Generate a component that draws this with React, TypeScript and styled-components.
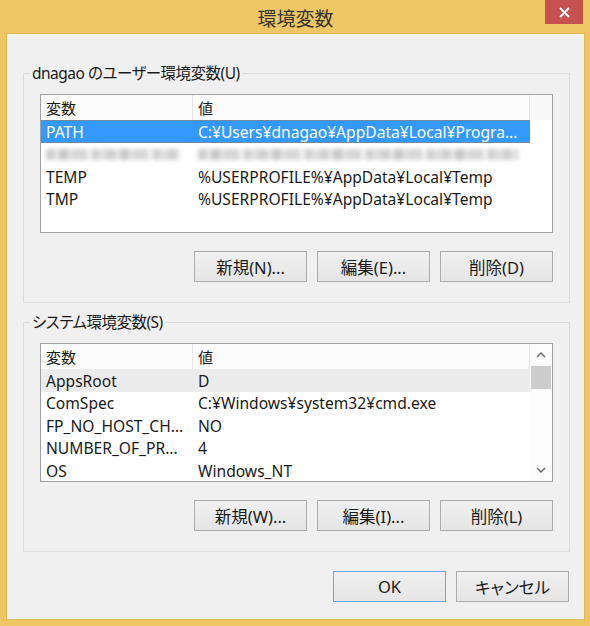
import React from "react";
import styled, { createGlobalStyle } from "styled-components";

const Global = createGlobalStyle`
  html, body { margin: 0; padding: 0; background: #eec764; }
  body {
    font-family: "Noto Sans", "Noto Sans CJK JP", sans-serif;
    font-feature-settings: "palt";
  }
  * { box-sizing: border-box; }
`;

const Window = styled.div`
  width: 590px;
  height: 626px;
  background: #eec764;
  display: flex;
  flex-direction: column;
  padding: 0 6px 7px 7px;
`;

const TitleBar = styled.div`
  height: 34px;
  display: grid;
  grid-template-columns: 1fr auto 1fr;
`;

const Title = styled.div`
  grid-column: 2;
  align-self: center;
  font-family: "Noto Sans CJK JP", sans-serif;
  font-size: 19px;
  color: #333;
  line-height: 34px;
  padding-top: 1px;
`;

const CloseButton = styled.div`
  grid-column: 3;
  justify-self: end;
  align-self: start;
  margin-right: 1px;
  width: 38px;
  height: 24px;
  background: #c75050;
  display: flex;
  align-items: center;
  justify-content: center;
`;

const Client = styled.div`
  flex: 1;
  background: #f0f0f0;
  box-shadow: 0 0 0 1px #dcb95c;
  padding: 39px 14px 16px 16px;
  display: flex;
  flex-direction: column;
  color: #1a1a1a;
  font-size: 15px;
`;

const Group = styled.div<{ $gap?: number }>`
  position: relative;
  border: 1px solid #dcdcdc;
  padding: 20px 16px 20px 16px;
  margin-top: ${(p) => p.$gap ?? 0}px;
  display: flex;
  flex-direction: column;
`;

const GroupLabel = styled.span`
  position: absolute;
  top: -11px;
  left: 6px;
  padding: 0 2px;
  background: #f0f0f0;
  line-height: 20px;
  font-size: 15.5px;
  letter-spacing: -0.5px;
`;

const ListBox = styled.div`
  height: 139px;
  border: 1px solid #a0a0a0;
  background: #fff;
  display: flex;
  font-size: 15.6px;
`;

const ListMain = styled.div`
  width: 489px;
  display: flex;
  flex-direction: column;
`;

const Side = styled.div`
  flex: 1;
  display: flex;
  flex-direction: column;
`;

const HeaderRow = styled.div`
  height: 25px;
  display: flex;
  background: #fbfbfb;
`;

const HeaderCell = styled.div<{ $w: number }>`
  width: ${(p) => p.$w}px;
  padding-left: 5px;
  line-height: 25px;
  border-right: 1px solid #e5e5e5;
  font-family: "Noto Sans CJK JP", sans-serif;
  font-size: 15px;
`;

const HeaderFiller = styled.div`
  height: 25px;
  background: #f8f8f8;
`;

const Row = styled.div<{ $sel?: "focus" | "gray" }>`
  height: 22.5px;
  flex-shrink: 0;
  display: flex;
  align-items: center;
  padding-top: 1px;
  white-space: nowrap;
  background: ${(p) =>
    p.$sel === "focus" ? "#3399ff" : p.$sel === "gray" ? "#ececec" : "transparent"};
  color: ${(p) => (p.$sel === "focus" ? "#fff" : "inherit")};
  outline: ${(p) => (p.$sel === "focus" ? "1px solid #6f8aa6" : "none")};
  outline-offset: -1px;
`;

const Cell = styled.div<{ $w: number }>`
  width: ${(p) => p.$w}px;
  padding-left: 5px;
  overflow: hidden;
`;

const Blur = styled.div<{ $w: number }>`
  width: ${(p) => p.$w}px;
  height: 11px;
  background: repeating-linear-gradient(
    90deg,
    #c4c4c4 0 9px,
    #e6e6e6 9px 13px,
    #b9b9b9 13px 22px,
    #dadada 22px 27px,
    #cccccc 27px 41px,
    #f0f0f0 41px 46px,
    #c2c2c2 46px 52px,
    #d6d6d6 52px 61px
  );
  filter: blur(2px);
  opacity: 0.8;
`;

const BlurCell = styled.div<{ $w: number }>`
  width: ${(p) => p.$w}px;
  padding-left: 5px;
  display: flex;
  align-items: center;
`;

const Scrollbar = styled.div`
  flex: 1;
  display: flex;
  flex-direction: column;
  background: #fdfdfd;
`;

const ScrollButton = styled.div`
  height: 22px;
  display: flex;
  align-items: center;
  justify-content: center;
`;

const Thumb = styled.div`
  height: 23px;
  margin: 0 1px;
  background: #cdcdcd;
`;

const Track = styled.div`
  flex: 1;
`;

const ButtonRow = styled.div<{ $mt: number }>`
  display: flex;
  justify-content: flex-end;
  gap: 10px;
  margin-top: ${(p) => p.$mt}px;
`;

const Button = styled.button<{ $default?: boolean }>`
  width: 113px;
  height: 31px;
  border: 1px solid ${(p) => (p.$default ? "#6ea5dc" : "#acacac")};
  background: linear-gradient(#f0f0f0, #e5e5e5);
  font-family: "Noto Sans", "Noto Sans CJK JP", sans-serif;
  font-feature-settings: "palt";
  font-size: 16.5px;
  color: #1a1a1a;
  padding: 0;
`;

const Footer = styled.div`
  display: flex;
  justify-content: flex-end;
  gap: 10px;
  margin-top: 19px;
  padding-right: 1px;
`;

const Chevron = ({ up }: { up?: boolean }) => (
  <svg width="10" height="6" viewBox="0 0 10 6">
    <path
      d={up ? "M1 5 L5 1 L9 5" : "M1 1 L5 5 L9 1"}
      fill="none"
      stroke="#606060"
      strokeWidth="1.3"
    />
  </svg>
);

type Item = { name: string; value: string; sel?: "focus" | "gray"; blur?: boolean };

const userVars: Item[] = [
  { name: "PATH", value: "C:¥Users¥dnagao¥AppData¥Local¥Progra...", sel: "focus" },
  { name: "", value: "", blur: true },
  { name: "TEMP", value: "%USERPROFILE%¥AppData¥Local¥Temp" },
  { name: "TMP", value: "%USERPROFILE%¥AppData¥Local¥Temp" },
];

const sysVars: Item[] = [
  { name: "AppsRoot", value: "D", sel: "gray" },
  { name: "ComSpec", value: "C:¥Windows¥system32¥cmd.exe" },
  { name: "FP_NO_HOST_CH...", value: "NO" },
  { name: "NUMBER_OF_PR...", value: "4" },
  { name: "OS", value: "Windows_NT" },
];

const VarList = ({ items, scroll }: { items: Item[]; scroll?: boolean }) => (
  <ListBox>
    <ListMain>
      <HeaderRow>
        <HeaderCell $w={152}>変数</HeaderCell>
        <HeaderCell $w={337}>値</HeaderCell>
      </HeaderRow>
      {items.map((it, i) =>
        it.blur ? (
          <Row key={i}>
            <BlurCell $w={152}>
              <Blur $w={134} />
            </BlurCell>
            <BlurCell $w={337}>
              <Blur $w={320} />
            </BlurCell>
          </Row>
        ) : (
          <Row key={i} $sel={it.sel}>
            <Cell $w={152}>{it.name}</Cell>
            <Cell $w={337}>{it.value}</Cell>
          </Row>
        )
      )}
    </ListMain>
    {scroll ? (
      <Scrollbar>
        <ScrollButton>
          <Chevron up />
        </ScrollButton>
        <Thumb />
        <Track />
        <ScrollButton>
          <Chevron />
        </ScrollButton>
      </Scrollbar>
    ) : (
      <Side>
        <HeaderFiller />
      </Side>
    )}
  </ListBox>
);

export default function App() {
  return (
    <>
      <Global />
      <Window>
        <TitleBar>
          <Title>環境変数</Title>
          <CloseButton>
            <svg width="11" height="11" viewBox="0 0 11 11">
              <path d="M1 1 L10 10 M10 1 L1 10" stroke="#fff" strokeWidth="2" />
            </svg>
          </CloseButton>
        </TitleBar>
        <Client>
          <Group>
            <GroupLabel>dnagao のユーザー環境変数(U)</GroupLabel>
            <VarList items={userVars} />
            <ButtonRow $mt={18}>
              <Button>新規(N)...</Button>
              <Button>編集(E)...</Button>
              <Button>削除(D)</Button>
            </ButtonRow>
          </Group>
          <Group $gap={19}>
            <GroupLabel>システム環境変数(S)</GroupLabel>
            <VarList items={sysVars} scroll />
            <ButtonRow $mt={18}>
              <Button>新規(W)...</Button>
              <Button>編集(I)...</Button>
              <Button>削除(L)</Button>
            </ButtonRow>
          </Group>
          <Footer>
            <Button $default>OK</Button>
            <Button>キャンセル</Button>
          </Footer>
        </Client>
      </Window>
    </>
  );
}
